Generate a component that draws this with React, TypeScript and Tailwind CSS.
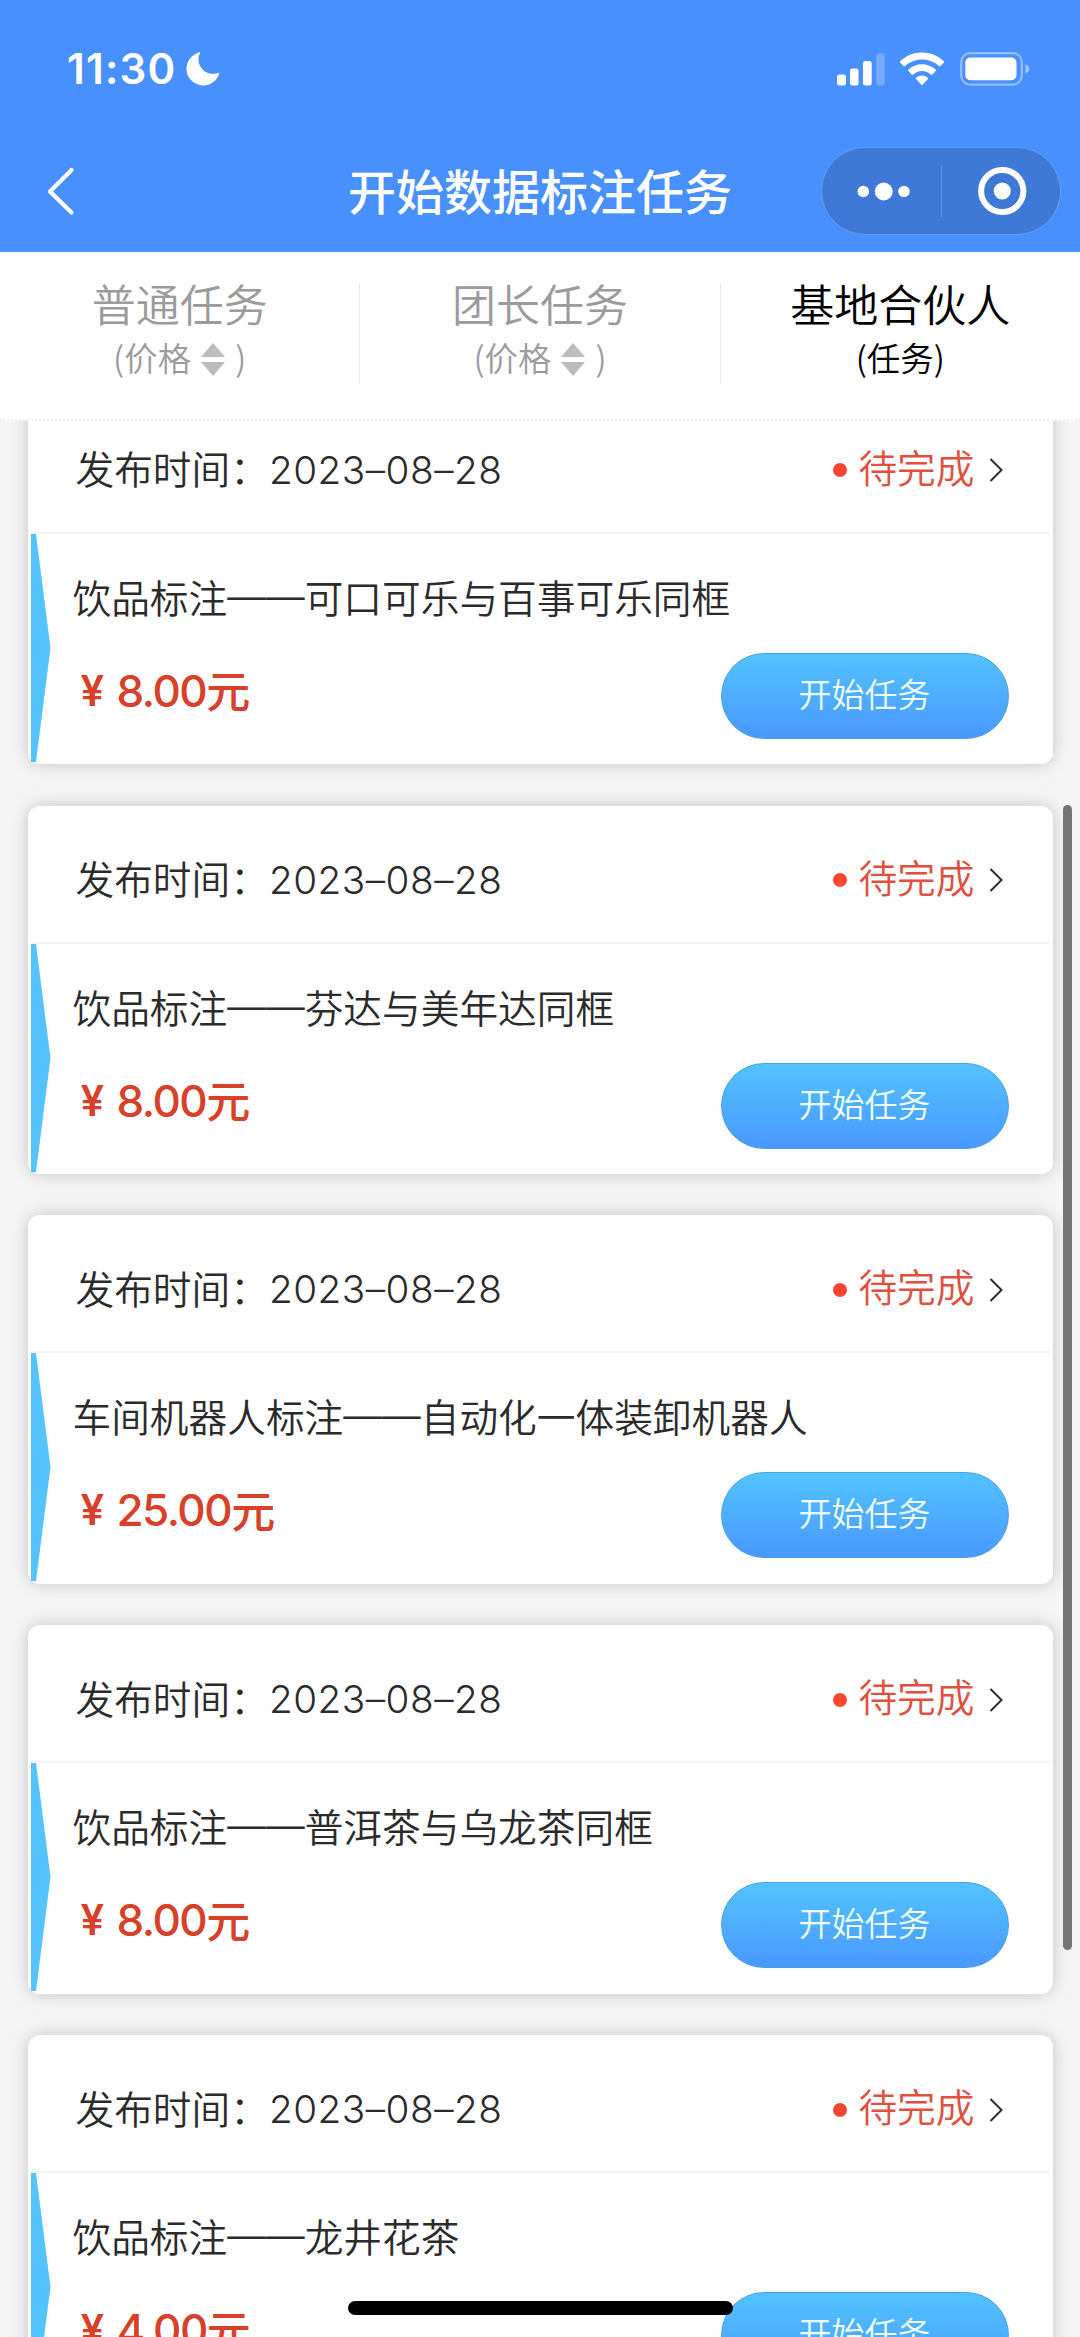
interface Task {
    title: string;
    price: string;
    date: string;
}

const tasks: Task[] = [
    { title: '饮品标注——可口可乐与百事可乐同框', price: '8.00', date: '2023–08–28' },
    { title: '饮品标注——芬达与美年达同框', price: '8.00', date: '2023–08–28' },
    { title: '车间机器人标注——自动化一体装卸机器人', price: '25.00', date: '2023–08–28' },
    { title: '饮品标注——普洱茶与乌龙茶同框', price: '8.00', date: '2023–08–28' },
    { title: '饮品标注——龙井花茶', price: '4.00', date: '2023–08–28' },
];

function StatusBar() {
    return (
        <div className="flex h-[137px] items-center justify-between pl-[67px] pr-[50px]">
            <div className="flex items-center">
                <span className="w-[119px] font-['Inter',sans-serif] text-[42px] font-semibold leading-none tracking-[1.2px]">11:30</span>
                <svg width="34" height="34" viewBox="0 0 34 34" fill="currentColor">
                    <path d="M13 .3C5.400 3 .5 9.500.5 17.100.5 26.200 8 33.500 17.200 33.500c7.300 0 13.500-4.600 15.900-11.200.3-.9-.4-1.500-1.200-1.200-1.500.5-3.100.8-4.800.8C19 21.900 12.500 15.500 12.500 7.500c0-2.200.5-4.200 1.400-6C14.400.6 13.800 0 13 .3z" />
                </svg>
            </div>
            <div className="flex items-center">
                <svg width="48" height="34" viewBox="0 0 48 34" fill="currentColor">
                    <rect x="0" y="22.500" width="9" height="11" rx="2.500" />
                    <rect x="13" y="16.500" width="8.500" height="17" rx="2.500" />
                    <rect x="26" y="9" width="8.700" height="24.500" rx="2.500" />
                    <rect x="39.200" y="1.500" width="8.500" height="32" rx="2.500" opacity="0.25" />
                </svg>
                <svg className="ml-[14px]" width="46" height="34" viewBox="0 0 46 34" fill="currentColor">
                    <path d="M23 .5c8.400 0 16 3.200 21.700 8.600.5.500.5 1.200 0 1.700l-3.200 3.300c-.5.500-1.200.5-1.700 0C35.400 10 29.500 7.600 23 7.600S10.600 10 6.200 14.100c-.5.500-1.200.5-1.700 0L1.300 10.800c-.5-.5-.5-1.200 0-1.700C7 3.700 14.600.5 23 .5z" />
                    <path d="M23 12.200c5.200 0 10 2 13.600 5.200.5.500.5 1.200 0 1.700l-3.300 3.300c-.5.500-1.100.5-1.600 0-2.300-2-5.400-3.300-8.700-3.300s-6.400 1.300-8.700 3.300c-.5.500-1.100.5-1.600 0l-3.300-3.300c-.5-.5-.5-1.200 0-1.700C13 14.200 17.800 12.200 23 12.200z" />
                    <path d="M23 23.600c2.200 0 4.200.8 5.700 2.100.5.400.5 1.100 0 1.600l-4.900 5.300c-.5.500-1.200.5-1.700 0l-4.900-5.300c-.4-.5-.4-1.200.1-1.600 1.500-1.300 3.500-2.100 5.700-2.100z" />
                </svg>
                <svg className="ml-[15px]" width="70" height="34" viewBox="0 0 70 34" fill="currentColor">
                    <rect x="1.200" y="1.200" width="60.600" height="31.400" rx="9" fill="none" stroke="currentColor" strokeWidth="2.200" opacity="0.42" />
                    <rect x="5.300" y="5.500" width="51.200" height="22.800" rx="5" />
                    <path d="M65.500 12.500c2.300.8 3.700 2.500 3.700 4.600s-1.400 3.800-3.700 4.600z" opacity="0.5" />
                </svg>
            </div>
        </div>
    );
}

function NavBar() {
    return (
        <div className="grid h-[108px] grid-cols-[1fr_auto_1fr] items-center pl-[46px] pr-[19px]">
            <svg width="30" height="50" viewBox="0 0 30 50" fill="none" stroke="currentColor" strokeWidth="4.200" strokeLinecap="round" strokeLinejoin="round">
                <path d="M25.500 4 4 25.500 25.500 46.500" />
            </svg>
            <h1 className="mr-[27px] mt-[-4px] text-[48px] font-medium leading-none">开始数据标注任务</h1>
            <div className="flex h-[88px] w-[240px] items-center justify-self-end rounded-full border border-[#5f9ff5] bg-[#3e79d8]">
                <svg className="flex-1" width="119" height="50" viewBox="0 0 119 50" fill="currentColor">
                    <circle cx="41.500" cy="25.500" r="5.800" />
                    <circle cx="62" cy="25.500" r="9" />
                    <circle cx="82.300" cy="25.500" r="5.800" />
                </svg>
                <div className="h-[51px] w-px bg-[#629bee]" />
                <svg className="flex-1" width="119" height="50" viewBox="0 0 119 50" fill="currentColor">
                    <circle cx="60.500" cy="25" r="21.200" fill="none" stroke="currentColor" strokeWidth="6" />
                    <circle cx="60.500" cy="25" r="8.600" />
                </svg>
            </div>
        </div>
    );
}

function SortTab({ label }: { label: string }) {
    return (
        <div className="flex flex-1 flex-col items-center text-[#9b9b9b]">
            <span className="text-[44px] leading-[64px]">{label}</span>
            <span className="flex h-[44px] items-center text-[33.500px] leading-[44px]">
                (价格
                <svg className="ml-[10px] mr-[10px] mt-[4px]" width="24" height="33" viewBox="0 0 24 33" fill="#bcbcbc">
                    <path d="M12 0 24 14H0zM0 19h24L12 33z" />
                </svg>
                )
            </span>
        </div>
    );
}

function Tabs() {
    return (
        <div className="flex h-[169px] items-start border-b-2 border-dotted border-[#eeeeee] bg-white pt-[19px]">
            <SortTab label="普通任务" />
            <div className="mt-[12px] h-[101px] w-px bg-[#e8e8e8]" />
            <SortTab label="团长任务" />
            <div className="mt-[12px] h-[101px] w-px bg-[#e8e8e8]" />
            <div className="flex flex-1 flex-col items-center text-black">
                <span className="text-[44px] leading-[64px]">基地合伙人</span>
                <span className="text-[33.500px] leading-[44px]">(任务)</span>
            </div>
        </div>
    );
}

function TaskCard({ task }: { task: Task }) {
    const [category, subject] = task.title.split('——');

    return (
        <div className="h-[368.300px] shrink-0 rounded-[12px] border-[3px] border-white bg-white text-[#2b2b2b] shadow-[0_0_18px_rgba(0,0,0,0.2)]">
            <div className="flex h-[135px] items-center justify-between border-b-2 border-[#f5f5f5] pl-[45px] pr-[47px] text-[38.700px]">
                <div className="mt-[4px] flex items-center">
                    <span>发布时间：</span>
                    <span className="mt-[5px] font-['Inter',sans-serif] font-light tracking-[0.5px] [font-feature-settings:'calt'_0]">{task.date}</span>
                </div>
                <div className="mt-[6px] flex items-center text-[#e0503f]">
                    <span className="mr-[11px] mt-[4px] size-[14px] rounded-full bg-[#ff4630]" />
                    <span className="mt-[-5px]">待完成</span>
                    <svg className="ml-[14px] mt-[4px]" width="14" height="24" viewBox="0 0 14 24" fill="none" stroke="#2b2b2b" strokeWidth="2">
                        <path d="M1.500 1 12.500 12 1.500 23" />
                    </svg>
                </div>
            </div>
            <div className="flex h-[228px]">
                <svg className="shrink-0" width="20" height="228" viewBox="0 0 20 228" fill="#55c3fd">
                    <path d="M0 0h5l14.500 114L5 228H0z" />
                </svg>
                <div className="flex-1 pl-[22px] pr-[41px]">
                    <div className="flex pt-[34px] text-[38.700px] leading-[56px]">
                        <span>{category}</span>
                        <span className="flex w-[77.400px] justify-center font-['Liberation_Sans',sans-serif]">——</span>
                        <span>{subject}</span>
                    </div>
                    <div className="flex items-start justify-between pt-[29px]">
                        <div className="mt-[6px] flex items-center pl-[8px] leading-[64px] text-[#d8402a]">
                            <span className="w-[36px] font-['Inter',sans-serif] text-[42px] font-semibold">¥</span>
                            <span className="font-['Inter',sans-serif] text-[44px] font-[550] tracking-[-1.500px]">{task.price}</span>
                            <span className="mt-[-3px] text-[44px] font-medium">元</span>
                        </div>
                        <button className="h-[86px] w-[288px] rounded-full border border-[#4b9fdf] bg-linear-to-b from-[#52c3ff] to-[#4a98ff] pb-[5px] text-[33px] leading-none text-[#f0ffff]">
                            开始任务
                        </button>
                    </div>
                </div>
            </div>
        </div>
    );
}

export default function App() {
    return (
        <div
            lang="zh-CN"
            className="relative flex h-[2337px] w-[1080px] flex-col overflow-hidden bg-[#f6f5f6] font-['Noto_Sans_CJK_SC',sans-serif] font-[350]"
        >
            <header className="h-[252px] shrink-0 bg-[#4990ff] text-white">
                <StatusBar />
                <NavBar />
            </header>
            <Tabs />
            <main className="min-h-0 flex-1 overflow-hidden pl-[27.500px] pr-[27.500px]">
                <div className="mt-[-25.300px] flex flex-col gap-[41.600px]">
                    {tasks.map((task) => (
                        <TaskCard key={task.title} task={task} />
                    ))}
                </div>
            </main>

            {/* Scroll thumb */}
            <div className="absolute right-2 top-[805px] h-[1145px] w-[9px] rounded-full bg-[#747474]" />
            {/* Home indicator */}
            <div className="absolute left-[348px] top-[2301px] h-[14px] w-[385px] rounded-full bg-black" />
        </div>
    );
}
